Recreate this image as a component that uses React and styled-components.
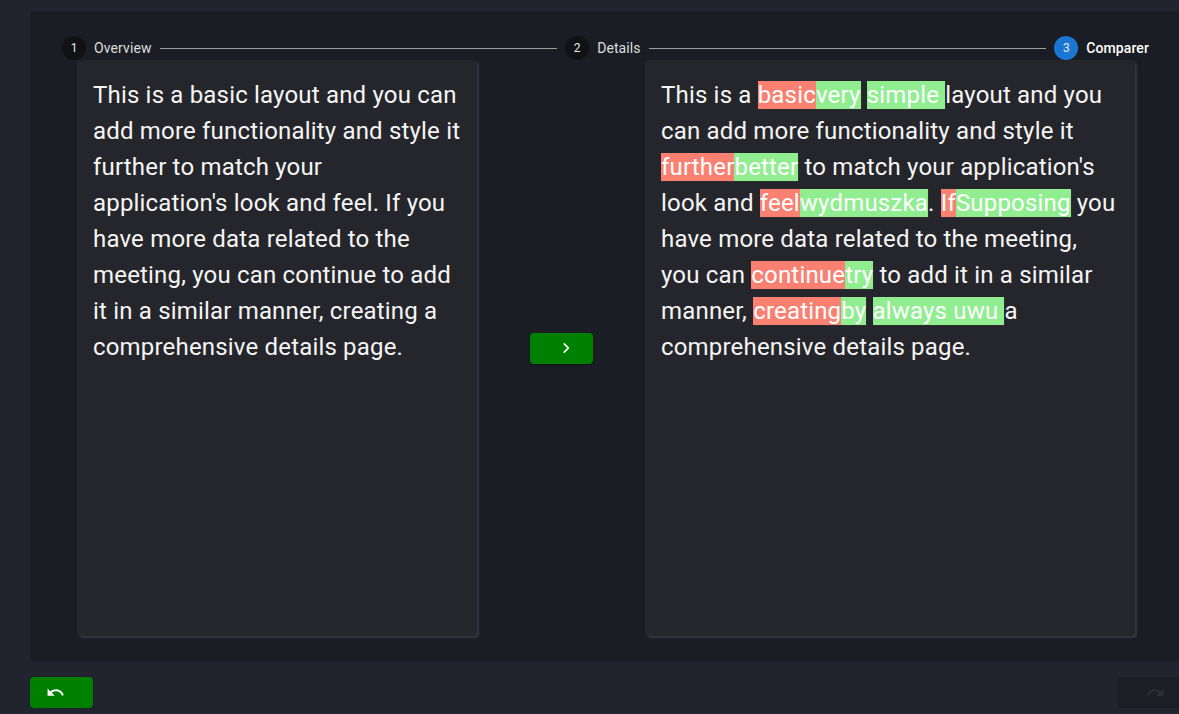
import { Fragment } from "react";
import styled, { createGlobalStyle } from "styled-components";

const GlobalStyle = createGlobalStyle`
  html, body {
    margin: 0;
    padding: 0;
    background: #21242e;
    overflow: hidden;
    font-family: Roboto, "Liberation Sans", sans-serif;
  }
`;

const Page = styled.div`
  width: 1151px;
  margin: 11px 0 0 30px;
  display: flex;
  flex-direction: column;
  gap: 15px;
`;

const Panel = styled.div`
  background: #1b1d24;
  border-radius: 4px;
  padding: 25px 0 26px;
  display: flex;
  flex-direction: column;
`;

const Stepper = styled.div`
  display: flex;
  align-items: center;
  padding: 0 24px;
`;

const Step = styled.div`
  display: flex;
  align-items: center;
  gap: 8px;
  padding: 0 8px;
`;

const StepIcon = styled.div`
  width: 24px;
  height: 24px;
  border-radius: 50%;
  background: ${(p) => (p.$active ? "#1976d2" : "#111216")};
  color: #e8e8e8;
  font-size: 12px;
  display: flex;
  align-items: center;
  justify-content: center;
`;

const StepLabel = styled.span`
  font-size: 14px;
  color: ${(p) => (p.$active ? "#ffffff" : "#dcdcdc")};
  font-weight: ${(p) => (p.$active ? 500 : 400)};
  letter-spacing: 0.1px;
`;

const Connector = styled.div`
  flex: 1;
  height: 1px;
  background: #9e9e9e;
`;

const Body = styled.div`
  display: flex;
  align-items: center;
  padding: 0 46px 0 47px;
`;

const Card = styled.div`
  width: ${(p) => p.$width}px;
  height: 576px;
  box-sizing: border-box;
  background: #25262b;
  border-radius: 4px;
  box-shadow: 2px 2px 2px #353741;
  padding: 17px 16px;
  color: #f5f5f5;
  font-size: 24px;
  line-height: 36px;
  letter-spacing: 0.18px;
`;

const Middle = styled.div`
  flex: 1;
  display: flex;
  justify-content: center;
`;

const GreenButton = styled.button`
  width: 63px;
  height: 31px;
  border: none;
  border-radius: 4px;
  background: #008000;
  color: #ffffff;
  display: flex;
  align-items: center;
  justify-content: center;
  padding: 0;
  box-shadow: 0 1px 2px rgba(0, 0, 0, 0.4);
  cursor: pointer;

  svg {
    margin-left: ${(p) => p.$shift || 0}px;
  }
`;

const GhostButton = styled(GreenButton)`
  background: #1c1e26;
  color: #2e3038;
  box-shadow: none;
`;

const Footer = styled.div`
  display: flex;
  justify-content: space-between;
`;

const Removed = styled.span`
  background: #fa8072;
  color: #ffffff;
  box-shadow: 1px 1px 0 rgba(60, 60, 60, 0.35);
`;

const Added = styled.span`
  background: #90ee90;
  color: #ffffff;
  box-shadow: 1px 1px 0 rgba(60, 60, 60, 0.35);
`;

const steps = [
  { n: 1, label: "Overview" },
  { n: 2, label: "Details" },
  { n: 3, label: "Comparer", active: true },
];

function Chevron() {
  return (
    <svg width="14" height="14" viewBox="0 0 24 24" fill="none" stroke="currentColor" strokeWidth="3" strokeLinecap="round" strokeLinejoin="round">
      <path d="M9 5l7 7-7 7" />
    </svg>
  );
}

function UndoIcon() {
  return (
    <svg width="19" height="19" viewBox="0 0 24 24" fill="currentColor">
      <path d="M12.5 8c-2.65 0-5.050.99-6.9 2.6L2 7v9h9l-3.62-3.62c1.39-1.16 3.16-1.88 5.12-1.88 3.54 0 6.55 2.31 7.6 5.5l2.37-.78C21.08 11.03 17.15 8 12.5 8z" />
    </svg>
  );
}

function RedoIcon() {
  return (
    <svg width="19" height="19" viewBox="0 0 24 24" fill="currentColor">
      <path d="M18.4 10.6C16.55 8.99 14.15 8 11.5 8c-4.65 0-8.58 3.03-9.96 7.22L3.9 16c1.05-3.19 4.05-5.5 7.6-5.5 1.95 0 3.73.72 5.12 1.88L13 16h9V7l-3.6 3.6z" />
    </svg>
  );
}

export default function App() {
  return (
    <>
      <GlobalStyle />
      <Page>
        <Panel>
          <Stepper>
            {steps.map((s, i) => (
              <Fragment key={s.n}>
                {i > 0 && <Connector />}
                <Step>
                  <StepIcon $active={s.active}>{s.n}</StepIcon>
                  <StepLabel $active={s.active}>{s.label}</StepLabel>
                </Step>
              </Fragment>
            ))}
          </Stepper>
          <Body>
            <Card $width={400}>
              This is a basic layout and you can add more functionality and
              style it further to match your application's look and feel. If
              you have more data related to the meeting, you can continue to
              add it in a similar manner, creating a comprehensive details page.
            </Card>
            <Middle>
              <GreenButton $shift={10}>
                <Chevron />
              </GreenButton>
            </Middle>
            <Card $width={490}>
              This is a <Removed>basic</Removed>
              <Added>very</Added> <Added>simple </Added>layout and you can add
              more functionality and style it <Removed>further</Removed>
              <Added>better</Added> to match your application's look and{" "}
              <Removed>feel</Removed>
              <Added>wydmuszka</Added>. <Removed>If</Removed>
              <Added>Supposing</Added> you have more data related to the
              meeting, you can <Removed>continue</Removed>
              <Added>try</Added> to add it in a similar manner,{" "}
              <Removed>creating</Removed>
              <Added>by</Added> <Added>always uwu </Added>a comprehensive
              details page.
            </Card>
          </Body>
        </Panel>
        <Footer>
          <GreenButton $shift={-12}>
            <UndoIcon />
          </GreenButton>
          <GhostButton disabled $shift={12}>
            <RedoIcon />
          </GhostButton>
        </Footer>
      </Page>
    </>
  );
}
